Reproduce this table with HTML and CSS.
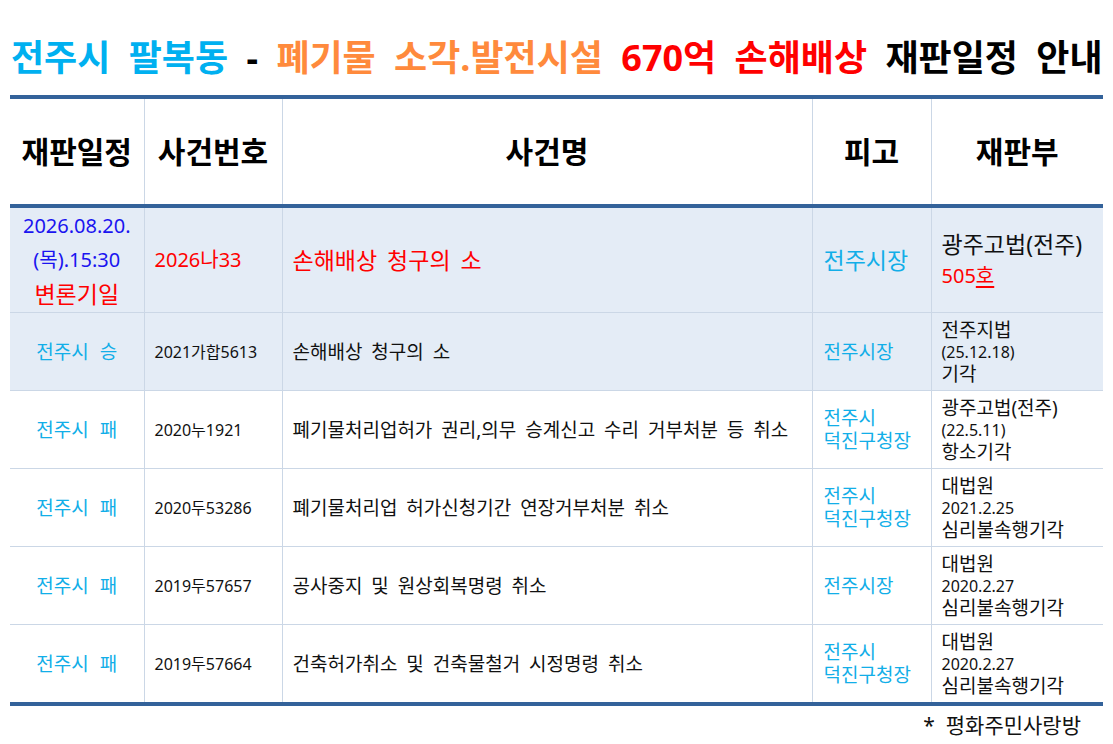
FILE: index.html
```html
<!DOCTYPE html>
<html lang="ko">
<head>
<meta charset="utf-8">
<link rel="stylesheet" href="styles.css">
</head>
<body>
<div class="page">
  <h1 class="title"><span class="c-sky">전주시 팔복동</span> <span class="c-black">-</span> <span class="c-orange">폐기물 소각.발전시설</span> <span class="c-red">670억 손해배상</span> <span class="c-black">재판일정 안내</span></h1>
  <table class="sched">
    <colgroup>
      <col class="w1"><col class="w2"><col class="w3"><col class="w4"><col class="w5">
    </colgroup>
    <thead>
      <tr>
        <th>재판일정</th><th>사건번호</th><th>사건명</th><th>피고</th><th>재판부</th>
      </tr>
    </thead>
    <tbody>
      <tr class="shade tall">
        <td class="date"><span class="blue">2026.08.20.</span><span class="blue">(목).15:30</span><span class="red big">변론기일</span></td>
        <td class="case red n20">2026나33</td>
        <td class="name red n23">손해배상 청구의 소</td>
        <td class="def sky n23">전주시장</td>
        <td class="court"><span class="n23 l31">광주고법(전주)</span><span class="red n20 l31">505<u>호</u></span></td>
      </tr>
      <tr class="shade">
        <td class="res sky">전주시 승</td>
        <td class="case">2021가합5613</td>
        <td class="name">손해배상 청구의 소</td>
        <td class="def sky">전주시장</td>
        <td class="court"><span>전주지법</span><span class="num">(25.12.18)</span><span>기각</span></td>
      </tr>
      <tr>
        <td class="res sky">전주시 패</td>
        <td class="case">2020누1921</td>
        <td class="name">폐기물처리업허가 권리,의무 승계신고 수리 거부처분 등 취소</td>
        <td class="def sky two">전주시 덕진구청장</td>
        <td class="court"><span>광주고법(전주)</span><span class="num">(22.5.11)</span><span>항소기각</span></td>
      </tr>
      <tr>
        <td class="res sky">전주시 패</td>
        <td class="case">2020두53286</td>
        <td class="name">폐기물처리업 허가신청기간 연장거부처분 취소</td>
        <td class="def sky two">전주시 덕진구청장</td>
        <td class="court"><span>대법원</span><span class="num">2021.2.25</span><span>심리불속행기각</span></td>
      </tr>
      <tr>
        <td class="res sky">전주시 패</td>
        <td class="case">2019두57657</td>
        <td class="name">공사중지 및 원상회복명령 취소</td>
        <td class="def sky">전주시장</td>
        <td class="court"><span>대법원</span><span class="num">2020.2.27</span><span>심리불속행기각</span></td>
      </tr>
      <tr>
        <td class="res sky">전주시 패</td>
        <td class="case">2019두57664</td>
        <td class="name">건축허가취소 및 건축물철거 시정명령 취소</td>
        <td class="def sky two">전주시 덕진구청장</td>
        <td class="court"><span>대법원</span><span class="num">2020.2.27</span><span>심리불속행기각</span></td>
      </tr>
    </tbody>
  </table>
  <p class="footer">*&nbsp; 평화주민사랑방</p>
</div>
</body>
</html>
```

FILE: styles.css
```css
html, body {
  margin: 0;
  padding: 0;
  background: #ffffff;
}
body {
  font-family: "Noto Sans", "Noto Sans CJK KR", sans-serif;
  color: #111111;
}
.page {
  width: 1093px;
  padding: 0 10px;
}
.title {
  margin: 0;
  height: 95px;
  padding-top: 36px;
  box-sizing: border-box;
  font-size: 36px;
  font-weight: 700;
  word-spacing: 9px;
  line-height: 44px;
  white-space: nowrap;
  padding-left: 1px;
}
.c-sky { color: #00b0f0; }
.c-orange { color: #ff8a3c; }
.c-red { color: #ff0000; }
.c-black { color: #000000; }

.sched {
  width: 1093px;
  border-collapse: collapse;
  table-layout: fixed;
  border-top: 4px solid #33629a;
  border-bottom: 4px solid #33629a;
}
.w1 { width: 134px; }
.w2 { width: 138px; }
.w3 { width: 530px; }
.w4 { width: 119px; }
.w5 { width: 172px; }

.sched th {
  height: 105px;
  padding: 0;
  font-size: 30px;
  font-weight: 700;
  color: #000000;
  border-left: 1px solid #cbd7e6;
  border-bottom: 4px solid #33629a;
  line-height: 32px;
}
.sched td {
  height: 77px;
  padding: 0;
  border-left: 1px solid #cbd7e6;
  border-top: 1px solid #cbd7e6;
  font-size: 19px;
  line-height: 22px;
  vertical-align: middle;
}
.sched th:first-child, .sched td:first-child { border-left: none; }
.sched tr.tall td { height: 104px; border-top: none; }
.shade td { background: #e4ecf6; }

.date, .res { text-align: center; }
.date span { display: block; line-height: 34px; font-size: 20px; }
.date .big { font-size: 23px; }
.res { font-size: 20px; word-spacing: 6px; }
.case { padding-left: 10px !important; font-size: 16px !important; }
.name { padding-left: 10px !important; word-spacing: 4px; }
.def { padding-left: 11px !important; }
.two { line-height: 23px !important; word-break: keep-all; padding-right: 4px !important; }
.court { padding-left: 10px !important; }
.court span { display: block; line-height: 22px; }
.court .num { font-size: 16px; }
.court .l31 { line-height: 31px; }

.blue { color: #1a14f0; }
.red { color: #ff0000; }
.sky { color: #12aee8; }
.n20 { font-size: 20px !important; }
.n21 { font-size: 21px !important; }
.n22 { font-size: 22px !important; }
.n23 { font-size: 23px !important; }
.court u { text-decoration: underline; text-underline-offset: 3px; }

.footer {
  margin: 0;
  height: 38px;
  text-align: right;
  padding-right: 22px;
  font-size: 21px;
  line-height: 38px;
  color: #111111;
}
```
